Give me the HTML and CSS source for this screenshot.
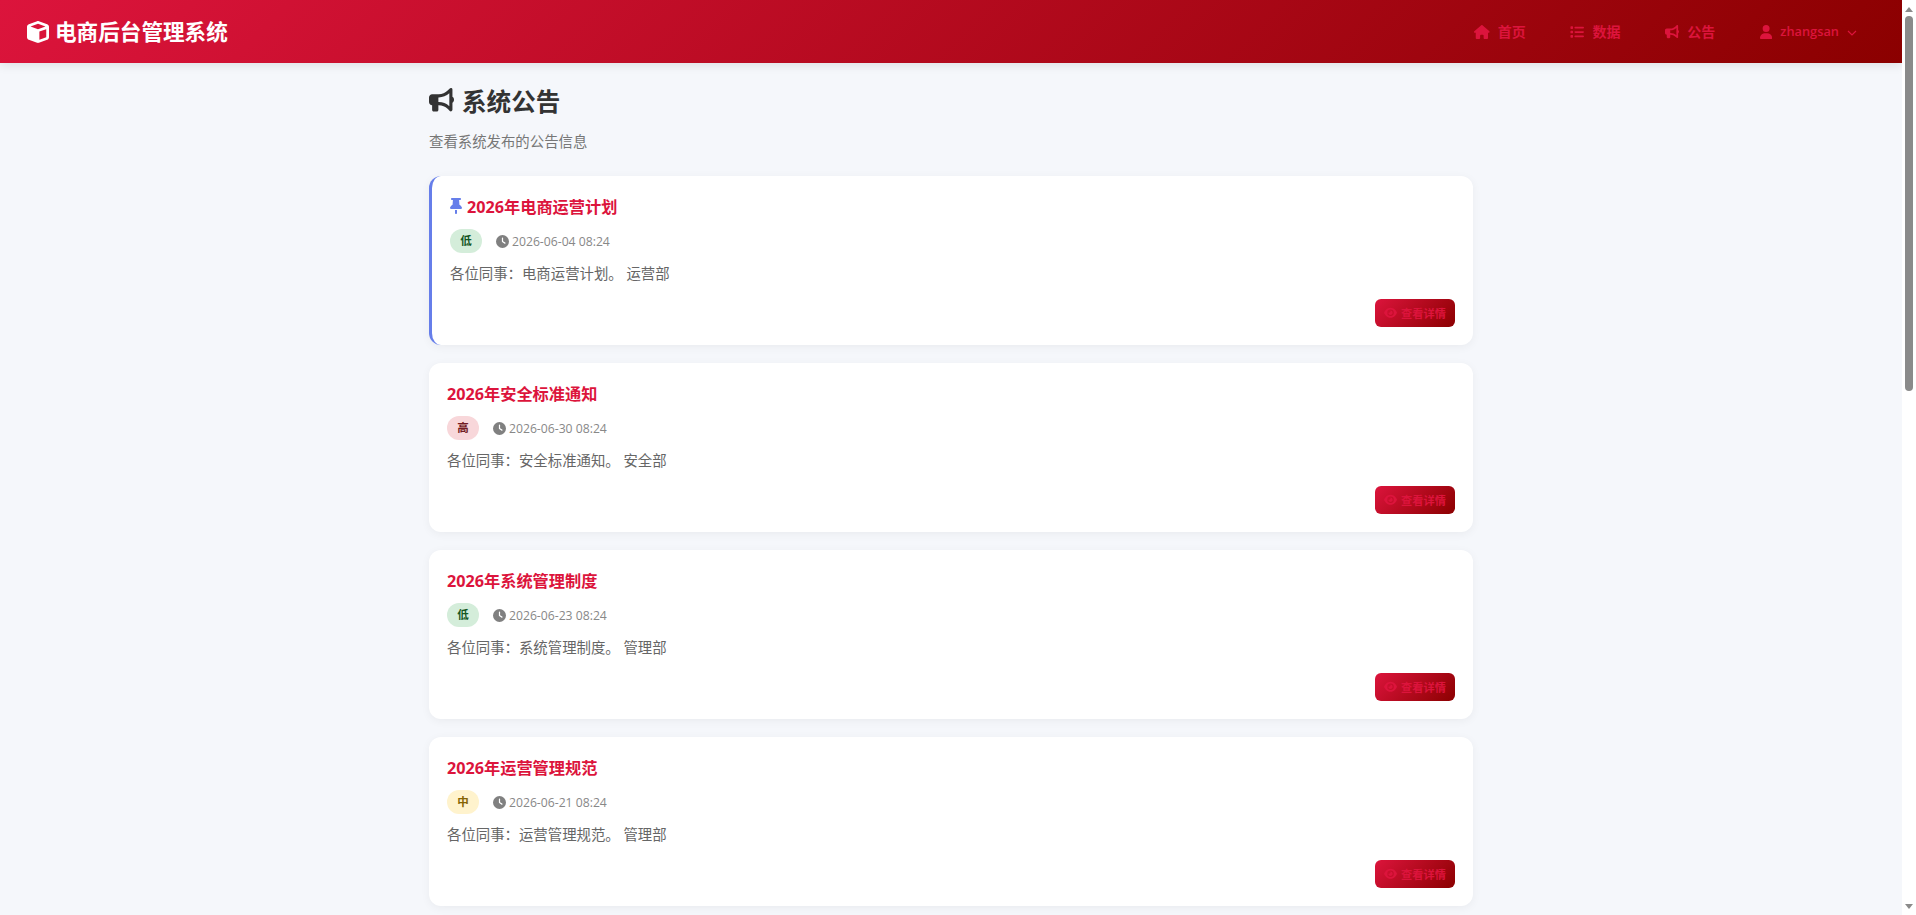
FILE: index.html
```html
<!DOCTYPE html>
<html lang="zh-CN">
<head>
<meta charset="utf-8">
<title>系统公告 - 电商后台管理系统</title>
<link rel="stylesheet" href="styles.css">
</head>
<body>
<svg class="sprite" aria-hidden="true">
  <symbol id="i-cube" viewBox="0 0 512 512"><path d="M234.5 5.7c13.9-5 29.1-5 43.1 0l192 68.6C495 83.4 512 107.5 512 134.6V377.4c0 27-17 51.2-42.5 60.3l-192 68.6c-13.9 5-29.1 5-43.1 0l-192-68.6C17 428.6 0 404.5 0 377.4V134.6c0-27 17-51.2 42.5-60.3l192-68.6zM256 66L82.3 128 256 190l173.7-62L256 66zm32 368.6l160-57.1v-188L288 246.6v188z"/></symbol>
  <symbol id="i-home" viewBox="0 0 576 512"><path d="M575.8 255.5c0 18-15 32.1-32 32.1h-32l.7 160.2c0 2.7-.2 5.4-.5 8.1V472c0 22.1-17.9 40-40 40H456c-1.1 0-2.2 0-3.3-.1c-1.4 .1-2.8 .1-4.2 .1H416 392c-22.1 0-40-17.9-40-40V448 384c0-17.7-14.3-32-32-32H256c-17.7 0-32 14.3-32 32v64 24c0 22.1-17.9 40-40 40H160 128.1c-1.5 0-3-.1-4.5-.2c-1.2 .1-2.4 .2-3.6 .2H104c-22.1 0-40-17.9-40-40V360c0-.9 0-1.9 .1-2.8V287.6H32c-18 0-32-14-32-32.1c0-9 3-17 10-24L266.4 8c7-7 15-8 22-8s15 2 21 7L564.8 231.5c8 7 12 15 11 24z"/></symbol>
  <symbol id="i-list" viewBox="0 0 512 512"><path d="M40 48C26.7 48 16 58.7 16 72v48c0 13.3 10.7 24 24 24H88c13.3 0 24-10.7 24-24V72c0-13.3-10.7-24-24-24H40zM192 64c-17.7 0-32 14.3-32 32s14.3 32 32 32H480c17.7 0 32-14.3 32-32s-14.3-32-32-32H192zm0 160c-17.7 0-32 14.3-32 32s14.3 32 32 32H480c17.7 0 32-14.3 32-32s-14.3-32-32-32H192zm0 160c-17.7 0-32 14.3-32 32s14.3 32 32 32H480c17.7 0 32-14.3 32-32s-14.3-32-32-32H192zM16 232v48c0 13.3 10.7 24 24 24H88c13.3 0 24-10.7 24-24V232c0-13.3-10.7-24-24-24H40c-13.3 0-24 10.7-24 24zM40 368c-13.3 0-24 10.7-24 24v48c0 13.3 10.7 24 24 24H88c13.3 0 24-10.7 24-24V392c0-13.3-10.7-24-24-24H40z"/></symbol>
  <symbol id="i-bullhorn" viewBox="0 0 512 512"><path d="M480 32c0-12.9-7.8-24.6-19.8-29.6s-25.7-2.2-34.9 6.9L381.7 53c-48 48-113.1 75-181 75H192 160 64c-35.3 0-64 28.7-64 64v96c0 35.3 28.7 64 64 64V448c0 17.7 14.3 32 32 32h64c17.7 0 32-14.3 32-32V352h8.7c67.9 0 133 27 181 75l43.6 43.6c9.2 9.2 22.9 11.9 34.9 6.9s19.8-16.6 19.8-29.6V300.4c18.6-8.8 32-32.5 32-60.4s-13.4-51.6-32-60.4V32zm-64 76.7V240 371.3C357.2 317.8 280.5 288 200.7 288H192V192h8.7c79.8 0 156.5-29.8 215.3-83.3z"/></symbol>
  <symbol id="i-user" viewBox="0 0 448 512"><path d="M224 256A128 128 0 1 0 224 0a128 128 0 1 0 0 256zm-45.7 48C79.8 304 0 383.8 0 482.3C0 498.7 13.3 512 29.7 512H418.3c16.4 0 29.7-13.3 29.7-29.7C448 383.8 368.2 304 269.7 304H178.3z"/></symbol>
  <symbol id="i-clock" viewBox="0 0 512 512"><path d="M256 0a256 256 0 1 1 0 512A256 256 0 1 1 256 0zM232 120V256c0 8 4 15.5 10.7 20l96 64c11 7.4 25.9 4.4 33.3-6.7s4.4-25.9-6.7-33.3L280 243.2V120c0-13.3-10.7-24-24-24s-24 10.7-24 24z"/></symbol>
  <symbol id="i-eye" viewBox="0 0 576 512"><path d="M288 32c-80.8 0-145.5 36.8-192.6 80.6C48.6 156 17.3 208 2.5 243.7c-3.3 7.9-3.3 16.7 0 24.6C17.3 304 48.6 356 95.4 399.4C142.5 443.2 207.2 480 288 480s145.5-36.8 192.6-80.6c46.8-43.5 78.1-95.4 93-131.1c3.3-7.9 3.3-16.7 0-24.6c-14.9-35.7-46.2-87.7-93-131.1C433.5 68.8 368.8 32 288 32zM144 256a144 144 0 1 1 288 0 144 144 0 1 1 -288 0zm144-64c0 35.3-28.7 64-64 64c-7.1 0-13.9-1.2-20.3-3.3c-5.5-1.8-11.9 1.6-11.7 7.4c.3 6.9 1.3 13.8 3.2 20.7c13.7 51.2 66.4 81.6 117.6 67.9s81.6-66.4 67.9-117.6c-11.1-41.5-47.8-69.4-88.6-71.1c-5.8-.2-9.2 6.1-7.4 11.7c2.1 6.4 3.3 13.2 3.3 20.3z"/></symbol>
  <symbol id="i-pin" viewBox="0 0 384 512"><path d="M32 32C32 14.3 46.3 0 64 0H320c17.7 0 32 14.3 32 32s-14.3 32-32 32H290.5l11.4 148.2c36.7 19.9 65.7 53.2 79.5 94.7l1 3c3.3 9.8 1.6 20.5-4.4 28.8s-15.7 13.3-26 13.3H32c-10.3 0-19.9-4.9-26-13.3s-7.7-19.1-4.4-28.8l1-3c13.8-41.5 42.8-74.8 79.5-94.7L93.5 64H64C46.3 64 32 49.7 32 32zM160 384h64v96c0 17.7-14.3 32-32 32s-32-14.3-32-32V384z"/></symbol>
</svg>

<header class="topbar">
  <a class="brand"><svg class="brand-icon"><use href="#i-cube"/></svg>电商后台管理系统</a>
  <nav class="nav">
    <a class="nav-link"><svg class="nav-icon nav-icon-home"><use href="#i-home"/></svg>首页</a>
    <a class="nav-link"><svg class="nav-icon nav-icon-list"><use href="#i-list"/></svg>数据</a>
    <a class="nav-link"><svg class="nav-icon nav-icon-horn"><use href="#i-bullhorn"/></svg>公告</a>
    <a class="nav-link nav-user"><svg class="nav-icon nav-icon-user"><use href="#i-user"/></svg>zhangsan<svg class="chevron" viewBox="0 0 10 6"><path d="M1 1l4 4 4-4"/></svg></a>
  </nav>
</header>

<main class="page">
  <h1 class="page-title"><svg class="title-icon"><use href="#i-bullhorn"/></svg>系统公告</h1>
  <p class="page-sub">查看系统发布的公告信息</p>

  <article class="card card-pinned">
    <h2 class="card-title"><svg class="pin-icon"><use href="#i-pin"/></svg>2026年电商运营计划</h2>
    <div class="card-meta"><span class="badge badge-low">低</span><span class="date"><svg class="clock-icon"><use href="#i-clock"/></svg>2026-06-04 08:24</span></div>
    <p class="card-text">各位同事：电商运营计划。 运营部</p>
    <div class="card-actions"><a class="btn"><svg class="eye-icon"><use href="#i-eye"/></svg>查看详情</a></div>
  </article>

  <article class="card">
    <h2 class="card-title">2026年安全标准通知</h2>
    <div class="card-meta"><span class="badge badge-high">高</span><span class="date"><svg class="clock-icon"><use href="#i-clock"/></svg>2026-06-30 08:24</span></div>
    <p class="card-text">各位同事：安全标准通知。 安全部</p>
    <div class="card-actions"><a class="btn"><svg class="eye-icon"><use href="#i-eye"/></svg>查看详情</a></div>
  </article>

  <article class="card">
    <h2 class="card-title">2026年系统管理制度</h2>
    <div class="card-meta"><span class="badge badge-low">低</span><span class="date"><svg class="clock-icon"><use href="#i-clock"/></svg>2026-06-23 08:24</span></div>
    <p class="card-text">各位同事：系统管理制度。 管理部</p>
    <div class="card-actions"><a class="btn"><svg class="eye-icon"><use href="#i-eye"/></svg>查看详情</a></div>
  </article>

  <article class="card">
    <h2 class="card-title">2026年运营管理规范</h2>
    <div class="card-meta"><span class="badge badge-mid">中</span><span class="date"><svg class="clock-icon"><use href="#i-clock"/></svg>2026-06-21 08:24</span></div>
    <p class="card-text">各位同事：运营管理规范。 管理部</p>
    <div class="card-actions"><a class="btn"><svg class="eye-icon"><use href="#i-eye"/></svg>查看详情</a></div>
  </article>
</main>

<div class="scrollbar" aria-hidden="true">
  <svg class="sb-arrow sb-arrow-up" viewBox="0 0 8 5"><path d="M4 0l4 5H0z"/></svg>
  <div class="sb-thumb"></div>
  <svg class="sb-arrow sb-arrow-down" viewBox="0 0 8 5"><path d="M0 0h8L4 5z"/></svg>
</div>
</body>
</html>
```

FILE: styles.css
```css
* { box-sizing: border-box; }

body {
  margin: 0 14px 0 0;
  background: #f5f7fb;
  color: #333;
  font-family: "Open Sans", "Noto Sans CJK SC", sans-serif;
  font-size: 14.4px;
}

.sprite { display: none; }

/* window scrollbar, drawn over the page edge */
.scrollbar {
  position: fixed;
  top: 0;
  right: 0;
  bottom: 0;
  width: 14px;
  padding: 7px 3px;
  display: flex;
  flex-direction: column;
  background: #fff;
}
.sb-arrow { width: 8px; height: 5px; fill: #8a8a8a; flex: none; }
.sb-thumb {
  width: 8px;
  height: 375px;
  margin-top: 4px;
  border-radius: 4px;
  background: #8a8a8a;
}
.sb-arrow-down { margin-top: auto; margin-bottom: -1px; }

.topbar {
  height: 63px;
  display: flex;
  align-items: center;
  justify-content: space-between;
  padding: 0 45px 2px 27px;
  background: linear-gradient(135deg, #dc143c 0%, #8b0000 100%);
  box-shadow: 0 2px 10px rgba(0, 0, 0, 0.1);
  position: relative;
}

.brand {
  display: flex;
  align-items: center;
  color: #fff;
  font-size: 21.6px;
  font-weight: 700;
}
.brand-icon { width: 22px; height: 22px; fill: #fff; margin: 2px 6px 0 0; }

.nav { display: flex; align-items: center; gap: 44.8px; }

.nav-link {
  display: flex;
  align-items: center;
  color: #dc143c;
  font-size: 14px;
  font-weight: 700;
}
.nav-icon { height: 14px; fill: #dc143c; margin: 2px 8px 0 0; }
.nav-icon-home { width: 15.75px; }
.nav-icon-list { width: 14px; }
.nav-icon-horn { width: 14px; }
.nav-icon-user { width: 12.25px; }
.nav-user { font-weight: 600; font-size: 12.8px; }
.chevron { width: 10px; height: 6px; margin-left: 8px; margin-top: 4px; fill: none; stroke: #dc143c; stroke-width: 1.2; }

.page {
  width: 1044px;
  margin: 0 auto;
  padding: 18px 0 20px;
}

.page-title {
  display: flex;
  align-items: center;
  margin: 0;
  height: 38px;
  font-size: 24.6px;
  font-weight: 700;
  color: #333;
}
.title-icon { width: 25px; height: 25px; fill: #333; margin-right: 8px; }

.page-sub {
  margin: 12px 0 0;
  height: 22px;
  line-height: 22px;
  font-size: 14.4px;
  color: #777;
}

.card {
  margin-top: 18px;
  padding: 18px;
  background: #fff;
  border-radius: 12px;
  box-shadow: 0 2px 10px rgba(0, 0, 0, 0.05);
}
.page-sub + .card { margin-top: 23px; }
.card-pinned { border-left: 3px solid #667eea; }

.card-title {
  display: flex;
  align-items: center;
  margin: 0;
  height: 24px;
  font-size: 16.2px;
  font-weight: 700;
  color: #dc143c;
}
.pin-icon { width: 12px; height: 16px; fill: #667eea; margin-right: 5px; }

.card-meta {
  display: flex;
  align-items: center;
  margin-top: 11px;
  height: 24px;
}

.badge {
  width: 32px;
  height: 24px;
  line-height: 24px;
  text-align: center;
  border-radius: 12px;
  font-size: 11.5px;
  font-weight: 700;
}
.badge-low { background: #d4edda; color: #155724; }
.badge-high { background: #f8d7da; color: #721c24; }
.badge-mid { background: #fff3cd; color: #856404; }

.date {
  display: flex;
  align-items: center;
  margin-left: 14px;
  font-size: 12.2px;
  color: #888;
}
.clock-icon { width: 13px; height: 13px; fill: #808080; margin-right: 3px; }

.card-text {
  margin: 9px 0 0;
  height: 24px;
  line-height: 24px;
  font-size: 14.4px;
  color: #666;
}

.card-actions { display: flex; justify-content: flex-end; margin-top: 13px; }

.btn {
  display: flex;
  align-items: center;
  justify-content: center;
  width: 80px;
  height: 28px;
  border-radius: 6px;
  background: linear-gradient(135deg, #dc143c 0%, #8b0000 100%);
  color: #dc143c;
  font-size: 11.2px;
  font-weight: 700;
}
.eye-icon { width: 13px; height: 11.5px; fill: #dc143c; margin-right: 4px; }
```
